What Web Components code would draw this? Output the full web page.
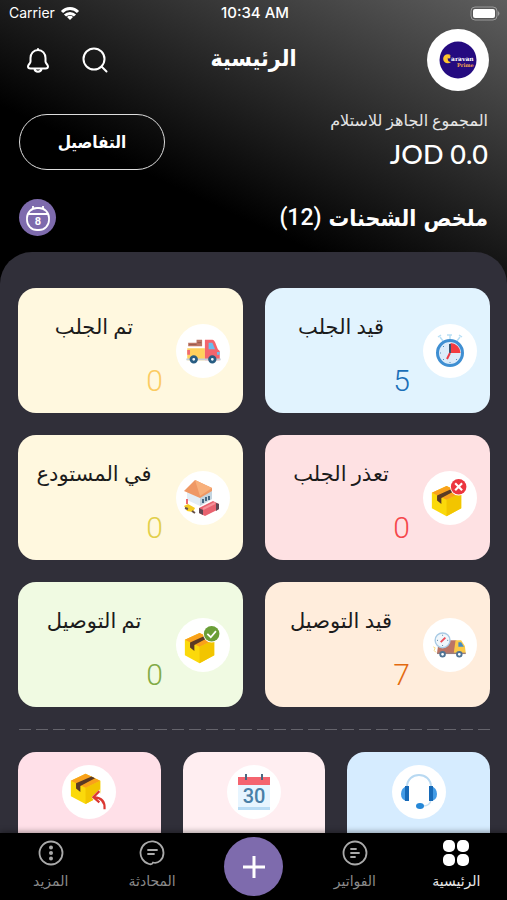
<!DOCTYPE html>
<html lang="ar" dir="rtl">
<head>
<meta charset="utf-8">
<meta name="viewport" content="width=device-width, initial-scale=1">
<title>الرئيسية</title>
<style>
	html, body{
		margin: 0;
		height: 100%;
	}
	body{
		background: #000;
		color: #fff;
		font-family: Roboto, "DejaVu Sans", sans-serif;
	}
</style>
</head>
<body>

<shipping-app>
	<status-bar slot="top" carrier="Carrier" time="10:34 AM"></status-bar>
	<app-header slot="top" title-text="الرئيسية"></app-header>
	<balance-row slot="top" label="المجموع الجاهز للاستلام" amount="JOD 0.0">التفاصيل</balance-row>
	<summary-row slot="top" count="(12)">ملخص الشحنات</summary-row>

	<stat-card slot="stats" icon="timer" value="5" style="--bg:#e1f3fe;--ink:#1a6fb8">قيد الجلب</stat-card>
	<stat-card slot="stats" icon="pickup" value="0" style="--bg:#fff8df;--ink:#fbcb62">تم الجلب</stat-card>
	<stat-card slot="stats" icon="failed" value="0" style="--bg:#fee1e3;--ink:#f5474b">تعذر الجلب</stat-card>
	<stat-card slot="stats" icon="warehouse" value="0" style="--bg:#fff8df;--ink:#e2cf4a">في المستودع</stat-card>
	<stat-card slot="stats" icon="delivery" value="7" style="--bg:#ffeddc;--ink:#e36a10">قيد التوصيل</stat-card>
	<stat-card slot="stats" icon="delivered" value="0" style="--bg:#f0fae2;--ink:#82aa46">تم التوصيل</stat-card>

	<quick-card slot="quick" icon="headset" style="--bg:#d6ecff"></quick-card>
	<quick-card slot="quick" icon="calendar" style="--bg:#ffeef1"></quick-card>
	<quick-card slot="quick" icon="returned" style="--bg:#ffe0e8"></quick-card>

	<tab-bar slot="bottom">
		<tab-item icon="home" active>الرئيسية</tab-item>
		<tab-item icon="invoice">الفواتير</tab-item>
		<add-button></add-button>
		<tab-item icon="chat">المحادثة</tab-item>
		<tab-item icon="more">المزيد</tab-item>
	</tab-bar>
</shipping-app>

<script>
const box = `
	<path d="M2 11 19 3 36 11 36 29 19 38 2 29Z" fill="#fbd90b"/>
	<path d="M19 19 36 11V29L19 38Z" fill="#f2c500"/>
	<path d="M2 11 19 3 36 11 19 19Z" fill="#f9a11b"/>
	<path d="M8 20v-6L26 6l4 2-17 9v7Z" fill="#5b3a24"/>`

const icons = {
	wifi: `<svg width="20" height="15" viewBox="0 0 20 15" fill="none" stroke="#fff" stroke-width="3">
		<path d="M2 6a11 11 0 0 1 16 0M5 9.500a7 7 0 0 1 10 0"/><path d="M10 14 7 11a4 4 0 0 1 6 0Z" fill="#fff" stroke="none"/></svg>`,
	battery: `<svg width="31" height="15" viewBox="0 0 31 15">
		<rect x="1" y="1" width="26" height="13" rx="4" fill="none" stroke="#999"/><rect x="3" y="3" width="22" height="9" rx="2" fill="#fff"/>
		<path d="M28 5q3 2.500 0 5Z" fill="#999"/></svg>`,
	bell: `<svg width="24" height="26" viewBox="0 0 24 26" fill="none" stroke="#fff" stroke-width="2" stroke-linecap="round" stroke-linejoin="round">
		<path d="M12 3C7.500 3 4.500 6.500 4.500 11v3.500C4.500 16.500 2 17.500 2 19.500 2 21 3 21.500 4.500 21.500h15c1.500 0 2.500-.5 2.500-2 0-2-2.500-3-2.500-5V11C19.500 6.500 16.500 3 12 3ZM12 2v1M8.500 22c.5 3.500 6.500 3.500 7 0"/></svg>`,
	search: `<svg width="26" height="26" viewBox="0 0 26 26" fill="none" stroke="#fff" stroke-width="2" stroke-linecap="round">
		<circle cx="12" cy="12" r="10.500"/><path d="m19.500 19.500 5 5"/></svg>`,
	logo: `<svg width="38" height="38" viewBox="0 0 38 38">
		<circle cx="19" cy="19" r="18.500" fill="#250b80"/>
		<path d="M12 14.500a4.600 4.600 0 1 0 0 6.500 3 3 0 1 1 0-6.500Z" fill="#ffc42e"/>
		<circle cx="10" cy="16" r="1.500" fill="#ffc42e"/>
		<text direction="ltr" x="12" y="20" font-family="DejaVu Serif" font-weight="700" font-size="6" fill="#fff">aravan</text>
		<text direction="ltr" x="18" y="26" font-family="DejaVu Serif" font-weight="700" font-size="5" fill="#f5a74a">Prime</text></svg>`,
	date: `<svg width="24" height="26" viewBox="0 0 24 26" fill="none" stroke="#fff" stroke-width="1.800">
		<rect x="1" y="3" width="22" height="22" rx="10"/><path d="M7 1v3M17 1v3M2 9h20"/>
		<text direction="ltr" x="12" y="20" text-anchor="middle" font-family="Roboto" font-weight="700" font-size="11" fill="#fff" stroke="none">8</text></svg>`,

	timer: `<svg width="30" height="36" viewBox="0 0 30 36" fill="none">
		<path d="m3 4 3-2M5 4l3 4M12 2h5M15 2v4M27 4l-3-2M25 4l-3 4" stroke="#b9dff5" stroke-width="1.500"/>
		<circle cx="15" cy="20" r="12.500" fill="#dcebf9" stroke="#3f8fd2" stroke-width="3"/>
		<path d="M15.500 20V10A10 10 0 0 1 25.500 20Z" fill="#f33b40"/>
		<path d="M15 29v1M5 20h1M8 13l1 1M8 27l1-1M22 27l-1-1" stroke="#568eb7"/>
		<path d="M15 11v9" stroke="#34546f" stroke-width="2"/><path d="m15 20-3 6" stroke="#ed3944" stroke-width="2"/></svg>`,
	pickup: `<svg width="35" height="26" viewBox="0 0 37 28">
		<path d="M2 5h9V2h6v7H2Z" fill="#bd7565"/><path d="M3 7h8M12 5h4" stroke="#985b4d"/>
		<path d="M1 11h19v13H1Z" fill="#ffd15c"/><path d="M1 13h3v5H1Z" fill="#f16a72"/>
		<path d="M20 2h8c3 0 4 6 6 10l2 2v10H20Z" fill="#f4646d"/><path d="M24 5h4l3 7h-7Z" fill="#68bdef"/>
		<path d="M0 22h37v2H0Z" fill="#c5cdd6"/><path d="M33 15h3v3h-3Z" fill="#71bfe9"/>
		<g fill="#f3f8fb" stroke="#285d83" stroke-width="3"><circle cx="8" cy="23" r="3"/><circle cx="28" cy="23" r="3"/></g></svg>`,
	failed: `<svg width="38" height="38" viewBox="0 0 44 44"><g transform="translate(-1 5)">${box}</g>
		<circle cx="32" cy="9" r="10" fill="#fff"/><circle cx="32" cy="9" r="9" fill="#ec3640"/><path d="m28 5 8 8m0-8-8 8" stroke="#fff" stroke-width="2.500"/></svg>`,
	warehouse: `<svg width="38" height="38" viewBox="0 0 38 38">
		<path d="m3 10 13 7 12-6v9l-12 7L3 21Z" fill="#e3edf4"/><path d="m16 17 12-6v9l-12 7Z" fill="#c3d4df"/>
		<path d="M0 12 11 1l17 8v3l-12 7Z" fill="#ef9864"/><path d="M11 1 28 9l-12 8Z" fill="#f8b07b"/>
		<path d="M19 20v4M22 18v4M25 17v4" stroke="#466883" stroke-width="2"/>
		<path d="m0 27 4-2 7 4-2 4-6-1Z" fill="#f4ca22"/><path d="m1 29 3 1M8 32l3 2" stroke="#64504a" stroke-width="2"/><path d="M3 20v5" stroke="#ef6a72" stroke-width="2"/>
		<path d="m15 29 14-7 6 3v5l-14 7-6-3Z" fill="#e86370"/><path d="m15 29 4 2v5l-4-2ZM32 24l3 1v5l-3 2Z" fill="#5d4853"/><path d="m19 30 12-6" stroke="#f6939a" stroke-width="2"/></svg>`,
	delivery: `<svg width="34" height="26" viewBox="0 0 36 28">
		<path d="M6 9h19v14H4Z" fill="#bc7464"/><path d="M24 9h6l4 6 1 8H22Z" fill="#fbc947"/><path d="M27 11h3l3 5h-6Z" fill="#458bc3"/>
		<path d="M4 23h31" stroke="#9c7f7c" stroke-width="1.500"/>
		<g fill="#fff" stroke="#4f7394" stroke-width="2"><circle cx="10" cy="24" r="2.500"/><circle cx="28" cy="24" r="2.500"/></g>
		<circle cx="10" cy="9" r="8" fill="#f0f6fb" stroke="#a8cae4" stroke-width="1.500"/>
		<path d="M10 3v1M10 14v1M4 9h1M15 9h1" stroke="#4d7796"/><path d="m8 11 5-5" stroke="#ef4a55" stroke-width="2"/>
		<path d="m0 16 2 1-1 3 2 2" stroke="#f7da79" fill="none"/></svg>`,
	delivered: `<svg width="38" height="38" viewBox="0 0 44 44"><g transform="translate(-1 5)">${box}</g>
		<circle cx="32" cy="9" r="10" fill="#fff"/><circle cx="32" cy="9" r="9" fill="#6a9e37"/><path d="m27 9 4 4 6-7" fill="none" stroke="#fff" stroke-width="2"/></svg>`,
	headset: `<svg width="36" height="36" viewBox="0 0 36 36" fill="none">
		<path d="M6 13C6-3 30-3 30 13" stroke="#b8d9f2" stroke-width="2"/><path d="M30 26q-1 6-8 6" stroke="#c5e0f3" stroke-width="1.500"/>
		<path d="M6 12Q0 14 0 20t6 7ZM30 12q6 2 6 8t-6 7Z" fill="#429be6"/><path d="M4 12h4v15H4ZM28 12h4v15h-4Z" fill="#176ab8"/>
		<ellipse cx="19" cy="32" rx="4" ry="3" fill="#2587d7"/></svg>`,
	calendar: `<svg width="34" height="36" viewBox="0 0 34 36">
		<rect x="1" y="3" width="32" height="33" rx="1" fill="#e7f5ff"/><path d="M1 33h32v3H1Z" fill="#b8dcf5"/><path d="M1 3h32v8H1Z" fill="#f4646f"/>
		<path d="M9 0v6M25 0v6" stroke="#4b6780" stroke-width="2"/>
		<text direction="ltr" x="17" y="29" text-anchor="middle" font-family="Roboto" font-weight="500" font-size="20" fill="#497fa7">30</text></svg>`,
	returned: `<svg width="38" height="38" viewBox="0 0 44 44"><g transform="translate(-1 -2)">${box}</g>
		<path d="m25 28 9-9 2 6q9 2 8 17h-9Z" fill="#fff"/>
		<path d="M40 42q1-13-12-14m6-7-7 7 7 6" fill="none" stroke="#db3832" stroke-width="2.500"/></svg>`,

	home: `<svg width="26" height="26" viewBox="0 0 26 26" fill="#fff"><rect width="12" height="12" rx="5"/><rect x="14" width="12" height="12" rx="5"/><rect y="14" width="12" height="12" rx="5"/><rect x="14" y="14" width="12" height="12" rx="5"/></svg>`,
	invoice: `<svg width="26" height="26" viewBox="0 0 26 26" fill="none" stroke="#aaa" stroke-width="1.800" stroke-linecap="round"><circle cx="13" cy="13" r="11.500"/><path d="M9 9h5M9 13h8M9 17h4"/></svg>`,
	chat: `<svg width="26" height="26" viewBox="0 0 26 26" fill="none" stroke="#aaa" stroke-width="1.800" stroke-linecap="round" stroke-linejoin="round"><path d="M14 22.500C19.500 24 24.500 19 24.500 13A11.500 11.500 0 1 0 10 24Q13 25 14 22.500ZM9 10h9M9 14h6"/></svg>`,
	more: `<svg width="26" height="26" viewBox="0 0 26 26" fill="#aaa"><circle cx="13" cy="13" r="11.500" fill="none" stroke="#aaa" stroke-width="1.800"/><circle cx="13" cy="7.500" r="2"/><circle cx="13" cy="13" r="2"/><circle cx="13" cy="18.500" r="2"/></svg>`,
	plus: `<svg width="24" height="24" viewBox="0 0 24 24"><path d="M12 1v22M1 12h22" stroke="#fff" stroke-width="3"/></svg>`
}

// shared part: attach the root, read attributes, draw
class BaseElement extends HTMLElement {

	constructor(){
		super()
		this.shadow = this.attachShadow({mode: 'open'})
	}

	connectedCallback(){
		this.shadow.innerHTML = `
			<style>
				*{box-sizing: border-box;}
				svg{display: block;}
				button{
					margin: 0;padding: 0;border: 0;
					background: none;color: inherit;
					font: inherit;cursor: pointer;
				}
			</style>
			${this.render()}
		`
	}

	attr(name){
		return this.getAttribute(name) || ''
	}

}

customElements.define('shipping-app', class extends BaseElement {
	render(){
		return `
			<style>
				:host{
					display: flex;
					flex-direction: column;
					height: 100vh;
					overflow: hidden;
					background: linear-gradient(205deg, #5e5e5e, #000 310px);
				}
				main{
					flex: 1;
					min-height: 0;
					overflow: hidden;
					margin-top: 16px;
					padding: 36px 17px 0 18px;
					background: #302f39;
					border-radius: 32px 32px 0 0;
				}
				.stats, .quick{display: grid;gap: 22px;}
				.stats{grid-template-columns: 1fr 1fr;}
				.quick{grid-template-columns: 1fr 1fr 1fr;}
				hr{
					height: 1px;
					margin: 22px 0;
					border: 0;
					background: repeating-linear-gradient(to left, #65646c 0 12px, transparent 12px 17px);
				}
			</style>
			<slot name="top"></slot>
			<main>
				<div class="stats"><slot name="stats"></slot></div>
				<hr>
				<div class="quick"><slot name="quick"></slot></div>
			</main>
			<slot name="bottom"></slot>
		`
	}
})

customElements.define('status-bar', class extends BaseElement {
	render(){
		return `
			<style>
				:host{
					display: grid;
					grid-template-columns: 1fr auto 1fr;
					align-items: center;
					height: 28px;
					padding: 0 6px 2px 9px;
					box-sizing: border-box;
					direction: ltr;
					font: 500 15px/16px Inter, sans-serif;
				}
				.carrier{display: flex;align-items: center;gap: 5px;font-size: 14px;font-weight: 400;}
				.battery{justify-self: end;}
			</style>
			<span class="carrier"><span>${this.attr('carrier')}</span>${icons.wifi}</span>
			<span>${this.attr('time')}</span>
			<span class="battery">${icons.battery}</span>
		`
	}
})

customElements.define('app-header', class extends BaseElement {
	render(){
		return `
			<style>
				:host{
					display: grid;
					grid-template-columns: 1fr auto 1fr;
					align-items: center;
					padding: 1px 18px 0;
				}
				.avatar{
					display: grid;
					place-items: center;
					width: 62px;
					height: 62px;
					border-radius: 50%;
					background: #fff;
				}
				h1{
					margin: 0;padding-bottom: 4px;
					font: 700 23px/32px "DejaVu Sans Condensed", "DejaVu Sans", sans-serif;
				}
				.tools{display: flex;justify-content: flex-end;align-items: center;gap: 32px;padding-left: 8px;}
			</style>
			<div class="avatar">${icons.logo}</div>
			<h1>${this.attr('title-text')}</h1>
			<div class="tools">
				<button aria-label="بحث">${icons.search}</button>
				<button aria-label="الإشعارات">${icons.bell}</button>
			</div>
		`
	}
})

customElements.define('balance-row', class extends BaseElement {
	render(){
		return `
			<style>
				:host{
					display: flex;
					align-items: center;
					justify-content: space-between;
					margin-top: 18px;
					padding: 0 19px;
				}
				.label{font-size: 16px;line-height: 24px;color: #e4e4e4;}
				.amount{font: 500 27px/42px Lato, sans-serif;}
				button{
					width: 146px;
					height: 56px;
					border: 1px solid #ddd;
					border-radius: 28px;
					font: 700 17px/24px "DejaVu Sans Condensed", "DejaVu Sans", sans-serif;
				}
			</style>
			<div>
				<div class="label">${this.attr('label')}</div>
				<div class="amount">${this.attr('amount')}</div>
			</div>
			<button><slot></slot></button>
		`
	}
})

customElements.define('summary-row', class extends BaseElement {
	render(){
		return `
			<style>
				:host{
					display: flex;
					align-items: center;
					justify-content: space-between;
					margin-top: 24px;
					padding: 0 19px;
				}
				h2{
					display: flex;
					gap: 7px;
					margin: 0;
					font: 700 23px/36px "DejaVu Sans Condensed", "DejaVu Sans", sans-serif;
				}
				.count{direction: ltr;font-family: Roboto, sans-serif;font-weight: 500;}
				button{
					display: grid;
					place-items: center;
					width: 37px;
					height: 37px;
					border-radius: 50%;
					background: #7e6bad;
				}
			</style>
			<h2><slot></slot><span class="count">${this.attr('count')}</span></h2>
			<button aria-label="التاريخ">${icons.date}</button>
		`
	}
})

customElements.define('stat-card', class extends BaseElement {
	render(){
		return `
			<style>
				:host{
					display: flex;
					align-items: center;
					gap: 6px;
					min-height: 125px;
					padding-right: 13px;
					box-sizing: border-box;
					border-radius: 18px;
					background: var(--bg);
				}
				.disc{
					display: grid;
					place-items: center;
					flex: none;
					width: 54px;
					height: 54px;
					border-radius: 50%;
					background: #fff;
				}
				.text{flex: 1;display: grid;gap: 24px;padding-top: 6px;}
				.name{font-size: 21px;line-height: 30px;text-align: center;color: #1b1b1b;white-space: nowrap;}
				.value{padding-right: 7px;font-size: 30px;line-height: 30px;font-weight: 300;color: var(--ink);}
			</style>
			<div class="disc">${icons[this.attr('icon')]}</div>
			<div class="text">
				<div class="name"><slot></slot></div>
				<div class="value">${this.attr('value')}</div>
			</div>
		`
	}
})

customElements.define('quick-card', class extends BaseElement {
	render(){
		return `
			<style>
				:host{
					display: block;
					min-height: 125px;
					padding-top: 13px;
					box-sizing: border-box;
					border-radius: 18px;
					background: var(--bg);
				}
				.disc{
					display: grid;
					place-items: center;
					width: 54px;
					height: 54px;
					margin: 0 auto;
					border-radius: 50%;
					background: #fff;
				}
			</style>
			<div class="disc">${icons[this.attr('icon')]}</div>
		`
	}
})

customElements.define('tab-bar', class extends BaseElement {
	render(){
		return `
			<style>
				:host{
					display: block;
					flex: none;
					position: relative;
					background: #000;
					box-shadow: 0 -1px 6px rgba(0, 0, 0, .4);
				}
				nav{
					display: grid;
					grid-template-columns: repeat(5, 1fr);
					align-items: center;
					min-height: 67px;
				}
			</style>
			<nav><slot></slot></nav>
		`
	}
})

customElements.define('tab-item', class extends BaseElement {
	render(){
		return `
			<style>
				:host{display: block;color: #8a8a8a;}
				:host([active]){color: #e8e8e8;}
				a{
					display: flex;
					flex-direction: column;
					align-items: center;
					gap: 5px;
					padding-bottom: 2px;
					color: inherit;
					text-decoration: none;
					font-size: 14px;
					line-height: 20px;
				}
			</style>
			<a href="#">${icons[this.attr('icon')]}<span><slot></slot></span></a>
		`
	}
})

customElements.define('add-button', class extends BaseElement {
	render(){
		return `
			<style>
				:host{display: grid;place-items: center;}
				button{
					display: grid;
					place-items: center;
					width: 59px;
					height: 59px;
					border-radius: 50%;
					background: #7e6bad;
				}
			</style>
			<button aria-label="إضافة">${icons.plus}</button>
		`
	}
})
</script>
</body>
</html>
